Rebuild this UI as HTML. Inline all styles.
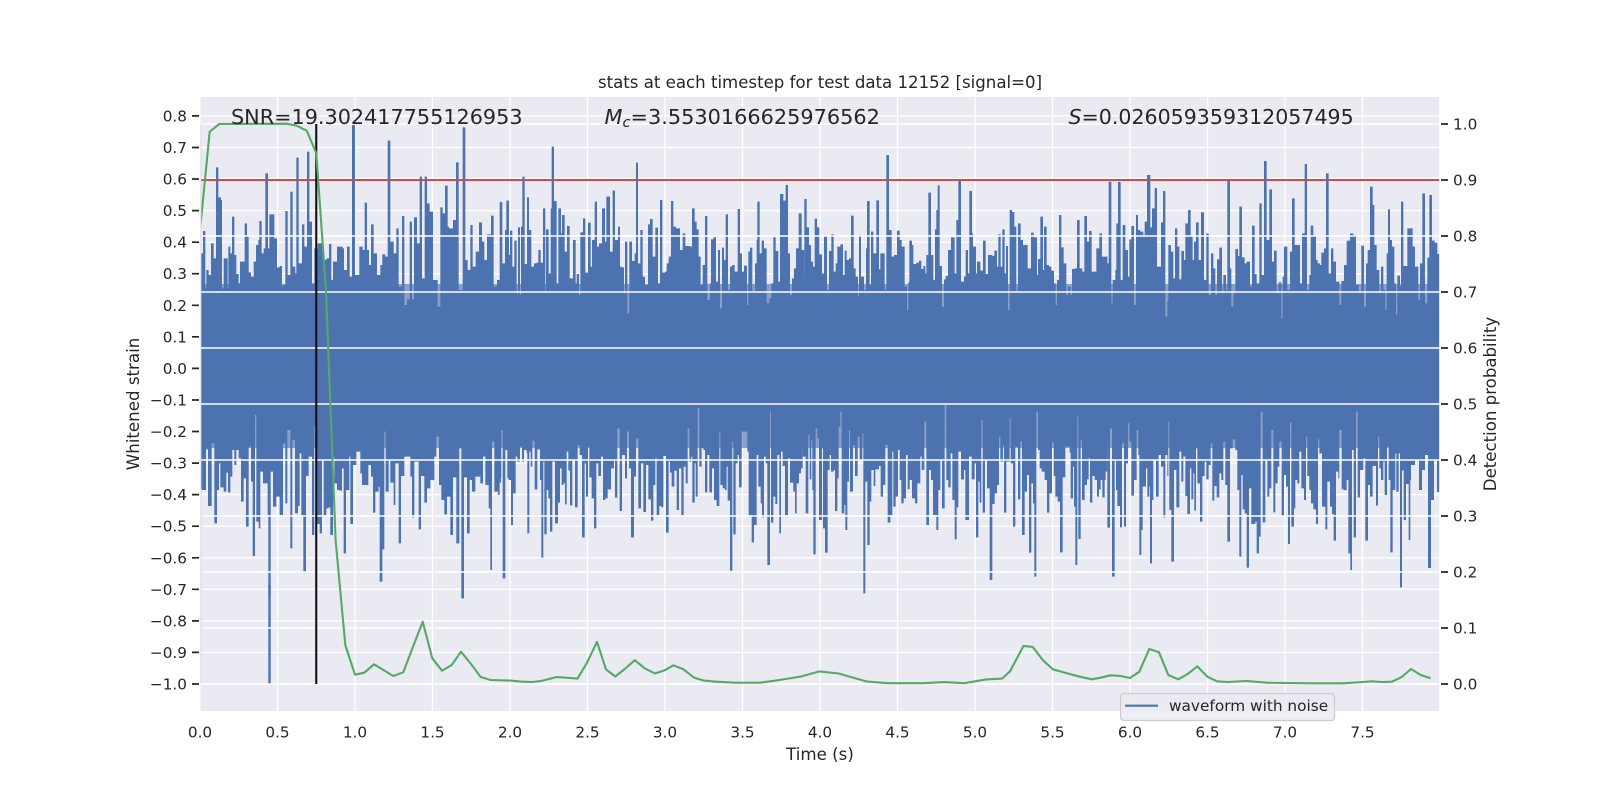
<!DOCTYPE html>
<html><head><meta charset="utf-8"><title>stats</title>
<style>html,body{margin:0;padding:0;background:#fff}svg{display:block}text{font-family:"DejaVu Sans",sans-serif;fill:#262626}</style></head>
<body>
<svg width="1600" height="800" viewBox="0 0 1600 800" xmlns="http://www.w3.org/2000/svg">
<rect width="1600" height="800" fill="#fff"/>
<rect x="200" y="96" width="1240" height="616" fill="#eaeaf2"/>
<g stroke="#fff" stroke-width="1.4" fill="none">
<path d="M200 115.9H1440M200 147.5H1440M200 179H1440M200 210.6H1440M200 242.2H1440M200 273.7H1440M200 305.3H1440M200 336.8H1440M200 368.4H1440M200 400H1440M200 431.5H1440M200 463.1H1440M200 494.6H1440M200 526.2H1440M200 557.8H1440M200 589.3H1440M200 620.9H1440M200 652.4H1440M200 684H1440"/>
<path d="M277.5 96V712M355 96V712M432.5 96V712M510 96V712M587.5 96V712M665 96V712M742.5 96V712M820 96V712M897.5 96V712M975 96V712M1052.5 96V712M1130 96V712M1207.5 96V712M1285 96V712M1362.5 96V712"/>
</g>
<g fill="#4c72b0">
<rect x="200" y="340" width="1240" height="40"/>
<rect x="268.3" y="585" width="2.4" height="99"/>
<g transform="translate(197,120) scale(.33333)">
<path d="M9 700V400H18V333H25V505H28V450H35V465H42V370H50V415H57V142H64V232H72V240H75V505H80V415H88V415H92V505H94V380H100V400H105V290H112V405H118V462H125V490H129V425H140V425H143V310H150V350H155V457H162V470H170V425H177V375H184V360H187V303H194V400H200V385H205V160H213V385H217V283H224V283H232V355H240V442H248V438H255V500H258V495H265V273H272V465H280V215H287V440H295V460H298V113H305V430H315V313H322V380H330V95H337V305H345V490H352V385H362V370H375V375H380V420H388V415H396V372H403V480H408V425H420V380H437V385H441V450H450V380H458V470H465V15H474V465H487V380H497V390H503V248H510V390H516V435H522V313H530V400H540V465H550V435H556V403H565V410H572V62H580V365H590V400H598V325H605V500H615V288H622V555H630V538H638V305H645V538H651V292H660V370H668V170H675V475H683V170H690V250H698V275H708V480H722V560H730V262H737V280H744V197H752V320H756V325H768V300H777V127H785V510H797V22H805V420H812V450H820V315H827V440H836V395H846V307H855V365H862V420H870V343H882V287H890V500H900V480H910V245H913V700Z"/>
</g>
<g transform="translate(500,120) scale(.33333)">
<path d="M-1 700V247H7V430H15V330H19V242H27V405H30V332H37V440H43V362H50V520H54V322H60V525H63V320H67V170H74V432H81V232H87V330H94V440H102V430H110V428H115V390H122V428H129V265H136V515H138V328H146V460H152V265H155V80H162V243H170V490H175V265H183V340H186V285H194V395H201V318H209V475H219V360H227V490H230V462H237V525H241V337H249V295H256V458H264V308H272V440H276V360H284V245H291V380H297V370H306V265H315V365H319V230H330V395H338V212H345V360H354V320H360V440H365V442H372V520H375V365H382V580H388V365H396V423H404V400H408V128H414V430H421V330H428V470H435V495H444V313H450V297H458V410H466V323H474V490H480V240H487V458H495V455H500V430H506V410H513V243H520V320H528V325H540V390H548V340H556V378H570V380H576V265H584V305H590V328H596V410H602V495H608V435H615V288H622V540H630V490H633V358H640V352H648V485H654V390H660V565H666V383H672V420H677V283H684V510H690V440H696V435H704V455H713V267H720V400H726V455H732V437H741V555H745V395H750V383H757V513H765V430H770V360H772V245H779V400H785V362H792V385H800V550H808V535H814V490H820V352H827V393H835V485H840V222H850V242H857V195H864V400H870V525H876V475H882V445H888V385H896V280H905V390H913V700Z"/>
</g>
<g transform="translate(803,120) scale(.33333)">
<path d="M-1 700V462H4V237H11V322H18V375H24V425H30V440H35V296H42V322H49V403H57V460H63V347H72V510H78V393H85V343H92V455H98V430H103V380H112V373H120V465H125V392H131V420H138V415H144V287H152V445H158V470H165V530H168V345H174V470H183V510H189V385H192V243H200V495H204V335H211V400H220V241H228V448H232V400H245V510H250V105H258V330H266V410H273V405H282V332H290V360H296V380H305V500H312V570H316V487H319V362H327V375H331V432H340V428H348V422H355V447H361V438H367V460H370V405H376V218H384V405H391V480H396V328H400V270H404V196H410V438H417V560H423V478H428V468H435V390H444V352H455V460H460V300H466V177H474V485H483V470H488V390H495V460H499V213H507V340H510V380H519V460H522V425H532V452H540V362H548V462H555V405H568V408H574V392H582V440H586V343H593V440H598V328H605V460H609V378H615V570H620V270H627V276H634V320H640V515H645V310H653V360H660V375H667V375H674V445H684V338H692V352H702V465H705V417H712V290H720V450H723V320H731V435H738V440H745V452H753V490H758V555H762V480H768V285H775V382H782V430H790V525H795V500H803V525H807V447H815V445H822V300H830V445H838V455H844V288H852V365H858V333H866V455H872V455H880V385H889V340H897V410H913V700Z"/>
</g>
<g transform="translate(1106,120) scale(.33333)">
<path d="M-1 700V410H4V430H8V185H16V550H20V480H28V450H31V310H36V186H44V480H50V315H58V390H66V470H70V358H76V318H84V555H90V285H96V330H103V335H112V345H116V305H123V165H133V322H138V265H146V204H153V440H162V440H165V307H171V213H178V590H184V545H187V375H195V395H202V475H207V325H214V380H220V478H226V393H234V420H238V310H246V270H254V350H260V420H264V365H270V307H278V420H285V277H294V480H301V340H308V525H315V400H322V445H328V525H333V418H340V383H348V520H352V465H360V510H364V183H372V445H376V560H382V520H388V387H396V408H400V260H408V412H416V430H422V425H432V500H438V317H446V462H452V490H460V250H467V465H474V123H482V360H490V208H498V425H504V392H512V520H518V487H526V595H530V470H534V380H544V510H552V395H558V235H566V375H574V375H582V490H588V340H596V132H603V510H610V465H614V317H622V350H630V420H635V430H642V435H646V398H654V385H660V160H668V460H675V385H682V425H690V485H700V555H706V483H714V435H722V362H732V340H742V345H750V495H758V515H766V377H774V560H780V430H785V390H792V200H800V255H805V375H812V450H820V515H825V440H832V510H838V570H842V400H846V268H852V360H858V380H865V490H870V585H874V467H882V500H885V245H892V438H904V325H913V700Z"/>
</g>
<g transform="translate(1200,90) scale(.33333)">
<path d="M629 800V415H638V470H645V530H655V630H660V520H667V310H675V640H682V503H688V315H696V452H704V458H712V492H720V800Z"/>
</g>
<g transform="translate(197,400) scale(.33333)">
<path d="M9 -100V268H15V270H22V270H27V148H33V318H44V130H52V370H60V270H66V190H70V262H80V275H88V218H93V277H100V230H106V150H112V195H118V150H125V175H132V305H140V235H147V380H155V140H162V245H167V468H174V45H178V365H185V385H190V215H198V250H208V250H212V345H214V590H221V215H228V320H238V290H248V345H258V130H265V310H271V90H280V445H286V120H294V340H303V318H308V160H313V345H319V515H327V228H335V170H345V405H352V80H360V372H368V400H375V180H380V345H388V325H395V322H400V405H408V175H412V250H420V270H428V272H435V205H440V460H447V270H457V170H460V372H468V195H478V155H490V220H495V255H505V255H514V195H522V230H528V338H535V275H545V260H548V545H556V448H562V95H566V275H575V180H580V248H590V315H595V190H605V430H612V228H622V170H640V230H645V352H652V185H665V388H672V228H682V308H690V265H700V240H712V170H718V110H726V255H733V300H742V343H750V290H760V405H768V232H778V430H787V145H793V595H801V232H810V400H818V240H825V275H835V230H843V230H850V250H858V170H865V255H875V325H880V510H885V125H892V275H903V285H908V235H913V-100Z"/>
</g>
<g transform="translate(500,400) scale(.33333)">
<path d="M-1 -100V248H3V90H8V535H16V150H22V235H26V240H33V375H39V280H47V170H52V185H60V140H66V185H72V150H80V160H82V400H88V155H92V200H97V122H104V268H112V148H120V240H124V473H130V185H133V403H140V270H145V295H150V395H157V185H165V370H174V308H180V205H185V255H190V250H195V313H200V155H205V212H210V316H217V180H225V322H233V135H239V165H246V412H254V190H258V290H264V140H268V232H275V295H282V385H289V190H295V228H303V170H309V300H316V295H323V268H333V205H342V180H345V293H352V85H359V333H366V165H375V235H381V95H387V205H393V412H402V230H408V115H415V325H423V190H430V336H438V195H445V298H453V362H460V255H466V175H470V345H478V318H484V322H490V168H498V398H506V185H510V218H515V260H523V212H530V330H537V205H544V345H551V200H557V250H563V85H568V185H574V170H577V308H584V190H587V290H593V25H598V200H605V143H610V150H615V277H622V165H628V277H636V205H642V300H650V318H658V95H661V255H668V265H675V270H680V200H683V302H690V512H697V125H700V403H707V190H713V165H717V262H725V95H742V155H746V345H755V427H762V375H770V165H775V260H782V310H786V352H792V170H797V190H802V495H810V35H813V368H820V290H826V312H832V165H838V400H843V155H848V198H855V345H864V175H870V248H880V275H885V340H890V250H897V220H903V205H908V143H913V-100Z"/>
</g>
<g transform="translate(803,400) scale(.33333)">
<path d="M-1 -100V170H8V340H16V105H20V238H25V120H28V270H31V463H38V85H43V115H48V360H57V145H60V385H66V458H74V210H80V165H84V215H92V210H96V333H103V235H107V80H112V35H116V340H124V315H127V390H133V245H138V90H141V275H150V135H156V228H164V110H170V180H178V100H181V580H187V245H193V435H200V305H205V210H212V258H217V208H228V198H233V290H240V255H247V135H254V368H262V345H268V155H271V320H278V290H285V150H290V240H295V310H302V295H309V165H314V268H320V240H327V295H336V310H343V250H352V170H356V210H364V65H370V375H378V210H384V240H390V345H400V390H406V270H412V180H417V325H425V15H430V240H436V262H443V160H448V300H455V418H461V322H466V155H474V238H483V210H487V360H498V170H506V238H515V190H519V412H526V245H530V308H535V60H539V338H546V180H552V265H560V540H568V312H575V280H582V255H588V110H592V185H600V135H603V338H610V185H620V55H623V190H630V380H637V140H645V298H652V125H657V405H665V275H672V225H678V458H685V250H690V310H694V530H700V35H705V150H710V205H716V215H725V240H732V338H739V280H747V128H752V228H757V290H764V305H771V457H779V232H787V140H800V158H803V295H810V200H813V320H817V495H823V50H826V417H833V120H837V300H845V255H852V238H857V175H861V308H868V228H875V240H882V290H888V268H893V240H898V292H905V240H908V215H913V-100Z"/>
</g>
<g transform="translate(1106,400) scale(.33333)">
<path d="M-1 -100V110H4V383H12V85H18V530H26V180H30V270H34V318H42V382H48V130H54V380H60V190H66V70H70V125H76V287H84V240H92V90H97V165H100V465H106V390H110V260H120V205H124V290H130V260H132V490H138V300H142V180H150V290H158V165H165V200H172V352H178V165H184V228H187V65H190V330H196V485H204V210H211V322H220V155H226V245H232V170H238V288H244V342H252V205H256V298H262V220H265V332H270V145H274V250H282V365H289V228H296V185H301V238H308V195H314V130H319V302H325V258H332V292H340V220H346V240H352V125H358V255H364V425H372V145H380V118H388V150H394V270H400V470H406V225H410V328H416V340H422V503H429V265H436V372H448V365H452V460H459V410H464V35H470V367H478V180H484V290H490V265H496V90H502V337H508V250H515V200H520V125H527V347H534V225H540V260H546V432H552V68H556V380H564V325H568V240H574V250H580V155H586V265H594V300H600V110H604V228H610V270H615V310H622V328H630V372H636V118H640V160H648V320H658V388H664V245H672V320H678V342H683V422H690V215H697V235H700V90H707V268H714V270H722V240H727V460H733V510H738V150H743V412H750V35H755V292H762V210H772V175H778V422H786V255H792V290H800V198H810V317H816V110H820V205H825V240H832V185H836V285H843V140H848V240H853V457H860V270H868V160H871V275H878V160H882V562H888V212H893V360H900V252H908V420H913V-100Z"/>
</g>
<path d="M1410 360V480H1411V465H1415V460H1419V490H1422V470H1425V455H1428V568H1431V500H1434V460H1437V492H1440V360Z"/>
<rect x="200" y="284" width="1240" height="60" fill-opacity=".62"/>
<rect x="200" y="372" width="1240" height="76" fill-opacity=".62"/>
</g>
<g stroke="#fff" stroke-width="1.4" fill="none">
<path d="M200 124H1440M200 180H1440M200 236H1440M200 292H1440M200 348H1440M200 404H1440M200 460H1440M200 516H1440M200 572H1440M200 628H1440M200 684H1440"/>
</g>
<path d="M200 180H1440" stroke="#c44e52" stroke-width="2.1" fill="none"/>
<path d="M316.25 124V684" stroke="#111" stroke-width="2.1" fill="none"/>
<polyline fill="none" stroke="#55a868" stroke-width="2.1" stroke-linejoin="round" points="200,230 209.7,131.7 219.4,124 286.7,123.7 296.7,125.7 306.7,130.7 316.25,153 325.9,289 335.6,540 345.3,645 355,674.7 364.3,672.7 374,664.3 393.3,676 403.3,672.3 413,646.7 422.7,621.7 432.3,658.3 442,670.7 451.7,665 461,651.7 471,664 480.7,677 490.7,680 510,680.6 520.4,681.6 531.6,682 541,681 557,677 577.5,678.6 586.7,663.3 597,641.8 606,669.4 615.3,676.5 625.5,668.4 634.7,660.2 644.9,668.4 655,673.5 664.3,670.4 673.5,665.3 683.7,669.4 693.9,677.6 704,680.6 714.3,681.6 734.7,682.7 760.2,682.7 775.5,680.6 801,676.5 819.4,671.4 838.8,673.5 849,676.5 867.3,681.6 887.8,683.2 923.5,683.2 943.9,682.1 964.3,683.2 984.7,679.6 1002,678.6 1010,671.4 1023.5,645.9 1032.7,646.9 1042.9,660.2 1053,669.4 1071.4,674.5 1080,676.7 1091.7,679.3 1100.7,677.7 1110.3,675.3 1120.7,676 1130,678 1139.3,671.7 1149.3,649 1159,652.3 1168.3,675 1178.3,679.3 1187.7,674 1197.3,666.3 1207.3,676.7 1217,681.3 1226.7,682 1246.7,681 1266.7,682.7 1285.7,683 1313,683.3 1343,683.3 1363,682 1371.7,681.3 1381.7,682 1392,681.7 1401.7,677 1411,669 1420.7,675 1430.7,678.3"/>
<g fill="#fff">
<rect x="185" y="90" width="15.6" height="7"/>
<rect x="190" y="90" width="1260" height="7"/>
<rect x="190" y="711" width="1260" height="5"/>
<rect x="190" y="90" width="10.6" height="626"/>
<rect x="1439.2" y="90" width="10" height="626"/>
</g>
<path d="M200.9 124V684" stroke="#d8d8e0" stroke-width="1"/>
<g stroke="#262626" stroke-width="1.7" fill="none">
<path d="M192 115.9H199M192 147.5H199M192 179H199M192 210.6H199M192 242.2H199M192 273.7H199M192 305.3H199M192 336.8H199M192 368.4H199M192 400H199M192 431.5H199M192 463.1H199M192 494.6H199M192 526.2H199M192 557.8H199M192 589.3H199M192 620.9H199M192 652.4H199M192 684H199"/>
<path d="M1441 124H1448M1441 180H1448M1441 236H1448M1441 292H1448M1441 348H1448M1441 404H1448M1441 460H1448M1441 516H1448M1441 572H1448M1441 628H1448M1441 684H1448"/>
</g>
<g font-size="15.28" text-anchor="end">
<text x="187" y="121.4">0.8</text><text x="187" y="153">0.7</text><text x="187" y="184.5">0.6</text><text x="187" y="216.1">0.5</text><text x="187" y="247.7">0.4</text><text x="187" y="279.2">0.3</text><text x="187" y="310.8">0.2</text><text x="187" y="342.3">0.1</text><text x="187" y="373.9">0.0</text><text x="187" y="405.5">−0.1</text><text x="187" y="437">−0.2</text><text x="187" y="468.6">−0.3</text><text x="187" y="500.1">−0.4</text><text x="187" y="531.7">−0.5</text><text x="187" y="563.3">−0.6</text><text x="187" y="594.8">−0.7</text><text x="187" y="626.4">−0.8</text><text x="187" y="657.9">−0.9</text><text x="187" y="689.5">−1.0</text>
</g>
<g font-size="15.28">
<text x="1453" y="129.5">1.0</text><text x="1453" y="185.5">0.9</text><text x="1453" y="241.5">0.8</text><text x="1453" y="297.5">0.7</text><text x="1453" y="353.5">0.6</text><text x="1453" y="409.5">0.5</text><text x="1453" y="465.5">0.4</text><text x="1453" y="521.5">0.3</text><text x="1453" y="577.5">0.2</text><text x="1453" y="633.5">0.1</text><text x="1453" y="689.5">0.0</text>
</g>
<g font-size="15.28" text-anchor="middle">
<text x="200" y="737.5">0.0</text><text x="277.5" y="737.5">0.5</text><text x="355" y="737.5">1.0</text><text x="432.5" y="737.5">1.5</text><text x="510" y="737.5">2.0</text><text x="587.5" y="737.5">2.5</text><text x="665" y="737.5">3.0</text><text x="742.5" y="737.5">3.5</text><text x="820" y="737.5">4.0</text><text x="897.5" y="737.5">4.5</text><text x="975" y="737.5">5.0</text><text x="1052.5" y="737.5">5.5</text><text x="1130" y="737.5">6.0</text><text x="1207.5" y="737.5">6.5</text><text x="1285" y="737.5">7.0</text><text x="1362.5" y="737.5">7.5</text>
</g>
<text x="820" y="88" font-size="16.6" text-anchor="middle">stats at each timestep for test data 12152 [signal=0]</text>
<text x="820" y="760" font-size="16.67" text-anchor="middle">Time (s)</text>
<text transform="translate(139,404) rotate(-90)" font-size="16.67" text-anchor="middle">Whitened strain</text>
<text transform="translate(1496,404) rotate(-90)" font-size="16.6" text-anchor="middle">Detection probability</text>
<text x="231" y="124" font-size="20.76">SNR=19.302417755126953</text>
<text x="604.5" y="124" font-size="20.83"><tspan font-style="italic">M</tspan><tspan font-style="italic" font-size="14.6" dy="3">c</tspan><tspan dy="-3">=3.5530166625976562</tspan></text>
<text x="1068.5" y="124" font-size="20.55"><tspan font-style="italic">S</tspan>=0.026059359312057495</text>
<rect x="1120.5" y="693.5" width="214" height="27" rx="3.5" fill="#eaeaf2" fill-opacity=".85" stroke="#cccccc" stroke-width="1.2"/>
<path d="M1125 705.7H1158" stroke="#4c72b0" stroke-width="2.1" fill="none"/>
<text x="1169" y="711" font-size="15.33">waveform with noise</text>
</svg>
</body></html>
